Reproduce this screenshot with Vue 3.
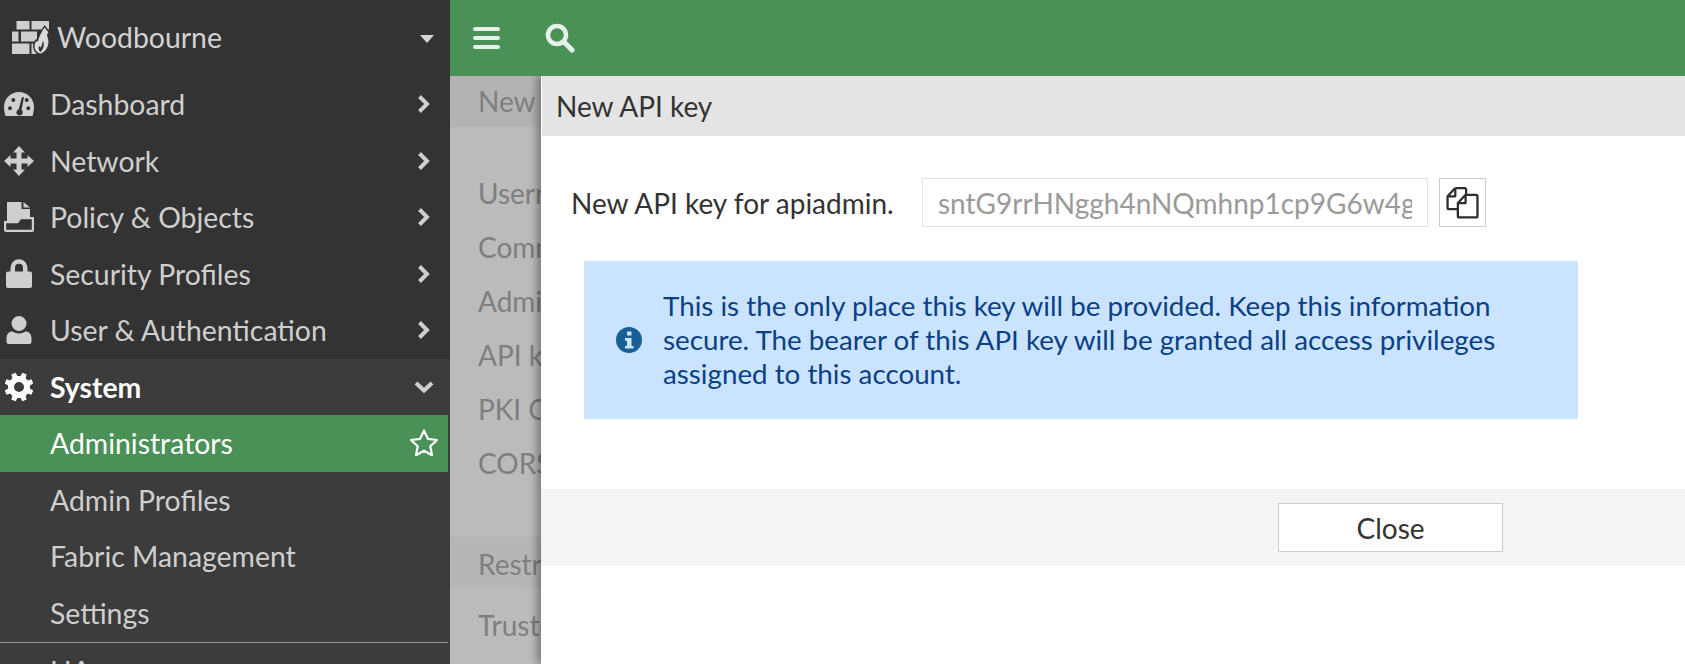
<script setup>
// gear outline built from teeth, easier than typing the whole path by hand
const gearPath = (() => {
  const cx = 15, cy = 15, teeth = 8
  const pts = []
  for (let i = 0; i < teeth; i++) {
    const a = (i / teeth) * Math.PI * 2 + Math.PI / 8
    const step = (Math.PI * 2) / teeth
    const at = (r, off) => {
      const x = cx + r * Math.cos(a + off * step)
      const y = cy + r * Math.sin(a + off * step)
      return x.toFixed(2) + ' ' + y.toFixed(2)
    }
    pts.push(at(11, -0.5), at(11, -0.32), at(14.6, -0.2), at(14.6, 0.2), at(11, 0.32))
  }
  return 'M' + pts.join('L') + 'ZM15 10a5 5 0 1 0 0 10a5 5 0 1 0 0-10Z'
})()

const icons = {
  dash: 'M15 3C6.700 3 0 9.700 0 18c0 3 .6 6 1.500 9H28.500c.9-3 1.500-6 1.500-9C30 9.700 23.300 3 15 3ZM4 19.300a2 2 0 1 0 4 0a2 2 0 1 0-4 0ZM7.300 11a2 2 0 1 0 4 0a2 2 0 1 0-4 0ZM22.300 19.300a2 2 0 1 0 4 0a2 2 0 1 0-4 0ZM20.700 11a2 2 0 1 0 4 0a2 2 0 1 0-4 0ZM18 8 20 8.600 17.500 20.800A3.200 3.200 0 1 1 14.700 20.300Z',
  move: 'M15 0 21 6.500H17.500V12.500H23.500V9L30 15 23.500 21V17.500H17.500V23.500H21L15 30 9 23.500H12.500V17.500H6.500V21L0 15 6.500 9V12.500H12.500V6.500H9Z',
  policy: 'M3 0H17.500V7H26V15H16L13 19H3ZM19.500 0 26 5.500H19.500ZM0 19H13L16 15H30V28a2 2 0 0 1-2 2H2a2 2 0 0 1-2-2ZM2.200 21.200V27.800H27.800V17.200H17L14 21.200Z',
  lock: 'M6.500 12.500V8.800a8.500 8.500 0 0 1 17 0v3.700h-4.500V8.800a4 4 0 0 0-8 0v3.700ZM4 12.500H26a2 2 0 0 1 2 2V27a2 2 0 0 1-2 2H4a2 2 0 0 1-2-2V14.500a2 2 0 0 1 2-2Z',
  user: 'M15 1a7.500 7.500 0 1 1 0 15 7.500 7.500 0 0 1 0-15ZM8.500 16.500c2 1.300 4 2 6.500 2s4.500-.7 6.500-2c3.500 0 6 2.500 6 7v3c0 1.300-.7 2.500-2 2.500h-21c-1.300 0-2-1.200-2-2.500v-3c0-4.500 2.500-7 6-7Z',
  gear: gearPath
}

const navItems = [
  { label: 'Dashboard', icon: 'dash' },
  { label: 'Network', icon: 'move' },
  { label: 'Policy & Objects', icon: 'policy' },
  { label: 'Security Profiles', icon: 'lock' },
  { label: 'User & Authentication', icon: 'user' }
]

const subItems = ['Admin Profiles', 'Fabric Management', 'Settings']

const formRows = ['Username', 'Comments', 'Administrator profile', 'API key', 'PKI Certificate', 'CORS Allow Origin']
</script>

<template>
  <div class="page">
    <aside class="sidebar">
      <div class="brand">
        <svg class="logo" viewBox="0 0 37 33">
          <g fill="#cfcfcf">
            <rect x="4.500" y="0" width="13" height="8.500" />
            <rect x="19.500" y="0" width="17.500" height="8.500" />
            <rect x="0" y="10.500" width="6.500" height="10" />
            <rect x="9" y="10.500" width="16" height="10" />
            <rect x="0" y="22.500" width="17.500" height="10.500" />
            <rect x="19.500" y="22.500" width="5" height="10.500" />
          </g>
          <path d="M32.500 4 38 11C36 12 36 15 37 18C39 24 36 32 29 34C24 34 21 29 21 25C21 20 25 17 25.500 18C26.500 14 29 9 32.500 4Z" fill="#333" />
          <path d="M32.500 6.500 36.500 11.500C34.500 12.500 35 15 36 18C37.500 23 35 30 29 32.500C25 32 22.500 29 22.500 25C22.500 21.500 25 19 26 20.500C27 16 29 11.500 32.500 6.500Z" fill="#dcdcdc" />
          <path d="M31 20C32.500 23 32 27.500 28.500 31C26.500 29.500 26 27 27.200 25C28 25.800 28.500 26.200 29 26.500C29.500 24.500 30.200 22.500 31 20Z" fill="#333" />
        </svg>
        <span class="brand-name">Woodbourne</span>
        <span class="caret"></span>
      </div>

      <nav>
        <div v-for="item in navItems" :key="item.label" class="nav-row">
          <svg class="nav-icon" viewBox="0 0 30 30"><path :d="icons[item.icon]" fill="#cfcfcf" fill-rule="evenodd" /></svg>
          <span class="nav-label">{{ item.label }}</span>
          <svg class="chevron" viewBox="0 0 14 20"><path d="M2.500 2.500 10 10l-7.500 7.500" fill="none" stroke="#cfcfcf" stroke-width="4" /></svg>
        </div>

        <div class="system-group">
          <div class="nav-row system">
            <svg class="nav-icon" viewBox="0 0 30 30"><path :d="icons.gear" fill="#fff" fill-rule="evenodd" /></svg>
            <span class="nav-label">System</span>
            <svg class="chevron-down" viewBox="0 0 20 14"><path d="M2 3l8 7.500L18 3" fill="none" stroke="#cfcfcf" stroke-width="4" /></svg>
          </div>
          <div class="nav-row sub active">
            <span class="nav-label">Administrators</span>
            <svg class="star" viewBox="0 0 30 30"><path d="M15 2.500 18.900 10.800 28 12 21.300 18.200 23 27.200 15 22.800 7 27.200 8.700 18.200 2 12 11.100 10.800Z" fill="none" stroke="#fff" stroke-width="2.200" stroke-linejoin="round" /></svg>
          </div>
          <div v-for="sub in subItems" :key="sub" class="nav-row sub">
            <span class="nav-label">{{ sub }}</span>
          </div>
          <div class="nav-row sub ha"><span class="nav-label">HA</span></div>
        </div>
      </nav>
    </aside>

    <main class="main">
      <header class="topbar">
        <svg class="bars" viewBox="0 0 27 24"><path d="M2 3h23M2 12h23M2 21h23" stroke="#e6f2e9" stroke-width="4" stroke-linecap="round" /></svg>
        <svg class="search" viewBox="0 0 30 30"><circle cx="12" cy="12" r="9" fill="none" stroke="#e6f2e9" stroke-width="4.500" /><path d="M18.500 18.500 27 27" stroke="#e6f2e9" stroke-width="5" stroke-linecap="round" /></svg>
      </header>

      <section class="content">
        <div class="page-title">New REST API Admin</div>
        <div class="form-rows">
          <div v-for="row in formRows" :key="row" class="form-row">{{ row }}</div>
        </div>
        <div class="form-row shaded">Restrict login to trusted hosts</div>
        <div class="form-row trusted">Trusted Hosts</div>

        <div class="modal">
          <div class="modal-head">New API key</div>
          <div class="modal-body">
            <div class="key-row">
              <label class="key-label">New API key for apiadmin.</label>
              <input class="key-input" type="text" readonly value="sntG9rrHNggh4nNQmhnp1cp9G6w4gxQ8" />
              <button class="copy-btn" type="button">
                <svg viewBox="0 0 32 32" width="33" height="33">
                  <path d="M9 2h9c1 0 1.500.500 1.500 1.500V9M9 2 1.500 10v11c0 1 .5 1.500 1.500 1.500h8M9 2v8H1.500" fill="none" stroke="#2d2d2d" stroke-width="2.200" stroke-linejoin="round" />
                  <path d="M19 8.500h10c1 0 1.500.500 1.500 1.500v19c0 1-.5 1.500-1.500 1.500H13c-1 0-1.500-.5-1.500-1.500V16.500ZM19 8.500v8h-7.500" fill="#fff" stroke="#2d2d2d" stroke-width="2.200" stroke-linejoin="round" />
                </svg>
              </button>
            </div>
            <div class="notice">
              <svg class="info" viewBox="0 0 26 26">
                <path fill-rule="evenodd" fill="#185f96" d="M13 0a13 13 0 1 1 0 26 13 13 0 0 1 0-26ZM11 4.500v4h4.500v-4ZM9 11v2.700h2v5.300H9v2.500h8.500V19h-2v-8Z" />
              </svg>
              <p>This is the only place this key will be provided. Keep this information secure. The bearer of this API key will be granted all access privileges assigned to this account.</p>
            </div>
          </div>
          <div class="modal-foot">
            <button class="close-btn" type="button">Close</button>
          </div>
        </div>
      </section>
    </main>
  </div>
</template>

<style>
html, body {
  margin: 0;
  background: #fff;
}
</style>

<style scoped>
.page {
  display: flex;
  width: 1685px;
  height: 664px;
  overflow: hidden;
  font-family: Lato, "Noto Sans", sans-serif;
  font-size: 28px;
}

/* Sidebar */
.sidebar {
  width: 450px;
  flex: none;
  background: #333;
  color: #cfcfcf;
  overflow: hidden;
  font-size: 28.4px;
}

.brand {
  height: 76px;
  display: flex;
  align-items: center;
  padding-left: 12px;
  padding-bottom: 2px;
  box-sizing: border-box;
  position: relative;
}

.logo {
  width: 37px;
  height: 33px;
}

.brand-name {
  margin-left: 8px;
  color: #d2d2d2;
}

.caret {
  position: absolute;
  left: 420px;
  top: 35px;
  border-left: 7px solid transparent;
  border-right: 7px solid transparent;
  border-top: 8px solid #d5d5d5;
}

.nav-row {
  height: 56.5px;
  width: 448px;
  box-sizing: border-box;
  display: flex;
  align-items: center;
  position: relative;
}

.nav-icon {
  width: 30px;
  height: 30px;
  margin-left: 4px;
  margin-right: 16px;
  flex: none;
}

.chevron {
  position: absolute;
  left: 417px;
  top: 18px;
  width: 14px;
  height: 20px;
}

.chevron-down {
  position: absolute;
  left: 414px;
  top: 21px;
  width: 20px;
  height: 14px;
}

.system-group {
  background: #3c3c3c;
  height: 400px;
}

.system {
  color: #fff;
  font-weight: 700;
}

.sub {
  padding-left: 50px;
}

.active {
  background: #4a9158;
  color: #fff;
}

.star {
  position: absolute;
  left: 409px;
  top: 13px;
  width: 30px;
  height: 30px;
}

.ha {
  border-top: 1px solid #999;
  margin-top: 1px;
}

/* Top bar + page behind the dialog */
.main {
  flex: 1;
  min-width: 0;
  display: flex;
  flex-direction: column;
}

.topbar {
  height: 76px;
  flex: none;
  background: #4a9158;
  display: flex;
  align-items: center;
  padding-left: 23px;
  gap: 45px;
}

.bars {
  width: 27px;
  height: 24px;
}

.search {
  width: 30px;
  height: 30px;
}

.content {
  flex: 1;
  position: relative;
  overflow: hidden;
  background: #bbb;
  color: #7f7f7f;
  white-space: nowrap;
}

.page-title {
  height: 51px;
  line-height: 51px;
  background: #b3b3b3;
  padding-left: 28px;
}

.form-rows {
  padding-top: 39px;
  padding-bottom: 47px;
}

.form-row {
  height: 54px;
  line-height: 54px;
  padding-left: 28px;
}

.shaded {
  height: 51px;
  background: #b6b6b6;
}

.trusted {
  margin-top: 10px;
}

/* Dialog */
.modal {
  position: absolute;
  left: 91px;
  top: 0;
  right: 0;
  bottom: 0;
  background: #fff;
  color: #333;
  box-shadow: -4px 0 8px rgba(0, 0, 0, 0.35);
}

.modal-head {
  height: 60px;
  line-height: 60px;
  margin-left: 1px;
  padding-left: 14px;
  background: #e4e4e4;
}

.modal-body {
  height: 353px;
  box-sizing: border-box;
  padding-top: 42px;
}

.key-row {
  display: flex;
  align-items: center;
  padding-left: 30px;
  height: 49px;
}

.key-label {
  width: 351px;
  flex: none;
}

.key-input {
  width: 506px;
  height: 49px;
  box-sizing: border-box;
  border: 1px solid #e3e3e3;
  padding: 0 15px;
  font: inherit;
  color: #9a9a9a;
  outline: none;
}

.copy-btn {
  width: 47px;
  height: 49px;
  margin-left: 11px;
  padding: 0;
  background: #fff;
  border: 1px solid #ccc;
  display: flex;
  align-items: center;
  justify-content: center;
}

.notice {
  margin: 34px 0 0 43px;
  width: 994px;
  height: 158px;
  box-sizing: border-box;
  background: #cae4ff;
  color: #0b3f86;
  display: flex;
  align-items: center;
  padding-left: 32px;
}

.info {
  width: 26px;
  height: 26px;
  flex: none;
  margin-right: 21px;
}

.notice p {
  margin: 0;
  width: 850px;
  white-space: normal;
  font-size: 27.75px;
  line-height: 34px;
}

.modal-foot {
  height: 77px;
  background: #f4f4f4;
  display: flex;
  align-items: center;
  padding-left: 737px;
}

.close-btn {
  width: 225px;
  height: 49px;
  background: #fff;
  border: 1px solid #ccc;
  font: inherit;
  color: #333;
  padding: 0;
}
</style>
